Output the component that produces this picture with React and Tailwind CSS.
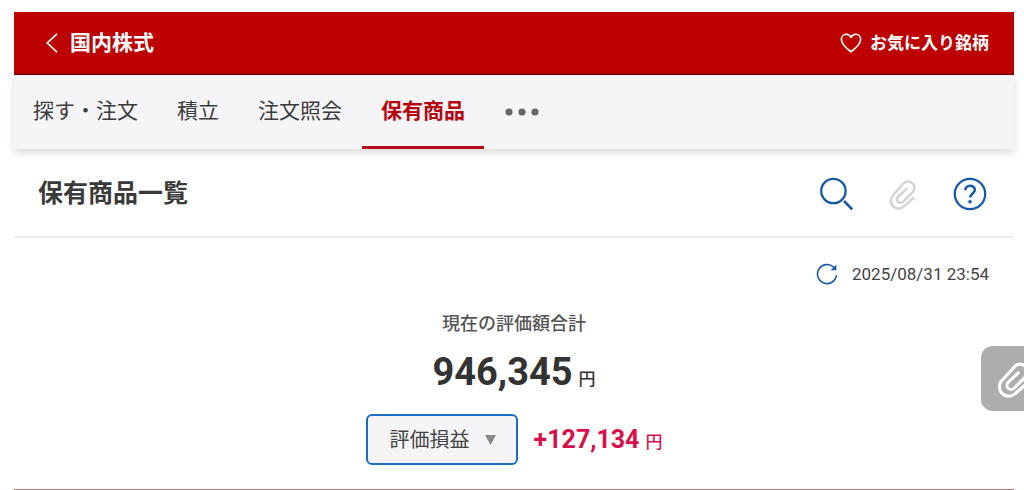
import React from 'react';

const tabs = [
  { id: 'search', label: '探す・注文' },
  { id: 'reserve', label: '積立' },
  { id: 'orders', label: '注文照会' },
  { id: 'holdings', label: '保有商品', active: true },
];

const ClipIcon = ({ className }) => (
  <svg viewBox="0 0 28 32" className={className} fill="none" stroke="currentColor" strokeLinecap="round" strokeLinejoin="round" aria-hidden="true">
    <path d="M24.6 20 15.1 28.2A7.8 7.8 0 0 1 4.1 17L14.8 5.2A6.3 6.3 0 0 1 23.8 14L14 23.8A3.5 3.5 0 0 1 9 18.8L17.6 10.8" />
  </svg>
);

const Header = () => (
  <header className="flex items-center justify-between border-b-2 border-[#8b0008] bg-[#bd0000] pt-[15px] pr-[25px] pb-[14px] pl-6 text-white">
    <a href="#" className="flex items-center gap-3 pl-2">
      <svg viewBox="0 0 12 20" className="h-5 w-3" fill="none" stroke="currentColor" strokeWidth="1.6" aria-hidden="true">
        <path d="M11 0.8 1.2 10 11 19.2" />
      </svg>
      <h1 className="text-[21px] leading-8 font-bold">国内株式</h1>
    </a>
    <button type="button" className="flex items-center gap-2 text-[17px] leading-8 font-bold">
      <svg viewBox="0 0 24 22" className="h-5 w-[22px]" fill="none" stroke="currentColor" strokeWidth="1.8" strokeLinejoin="round" aria-hidden="true">
        <path d="M12 20.6C8 17.6 1.4 12.8 1.4 7.2 1.4 3.9 3.8 1.4 6.8 1.4c2.3 0 4.2 1.3 5.2 3.4 1-2.1 2.9-3.4 5.2-3.4 3 0 5.4 2.5 5.4 5.8 0 5.6-6.6 10.4-10.6 13.4Z" />
      </svg>
      お気に入り銘柄
    </button>
  </header>
);

const Tabs = () => (
  <nav className="flex gap-px bg-[#f5f5f8] text-[21px] leading-8 text-[#3c3c3c] shadow-[0_4px_8px_rgba(0,0,0,0.14)]">
    {tabs.map((tab) => (
      <a
        key={tab.id}
        href="#"
        className={
          tab.active
            ? 'border-b-3 border-[#b00c14] px-[19px] pt-5 pb-[19px] font-bold text-[#b8040c]'
            : 'px-[19px] pt-5 pb-[19px]'
        }
      >
        {tab.label}
      </a>
    ))}
    <button type="button" aria-label="メニュー" className="px-5">
      <svg viewBox="0 0 34 8" className="h-2 w-[34px]" fill="#666" aria-hidden="true">
        <circle cx="4" cy="4" r="3.6" />
        <circle cx="17" cy="4" r="3.6" />
        <circle cx="30" cy="4" r="3.6" />
      </svg>
    </button>
  </nav>
);

const TitleBar = () => (
  <div className="flex items-center justify-between border-b-2 border-[#ececee] pt-[25px] pr-[27px] pb-[22px] pl-6">
    <h2 className="text-[25px] leading-10 font-bold text-[#3a3a3a]">保有商品一覧</h2>
    <div className="flex items-center gap-9 text-[#1559a8]">
      <button type="button" aria-label="検索">
        <svg viewBox="0 0 34 34" className="size-[34px]" fill="none" stroke="currentColor" strokeWidth="2.3" aria-hidden="true">
          <circle cx="14.4" cy="14" r="12.2" />
          <path d="m25 24 8.2 8.4" strokeWidth="2.6" />
        </svg>
      </button>
      <button type="button" aria-label="添付" className="text-[#d2d2d2]">
        <ClipIcon className="h-8 w-7 stroke-[2.4]" />
      </button>
      <button type="button" aria-label="ヘルプ">
        <svg viewBox="0 0 34 34" className="size-[34px]" fill="none" stroke="currentColor" strokeWidth="2.3" aria-hidden="true">
          <circle cx="17" cy="17" r="15.2" />
          <path d="M12.4 13.2c0-2.6 2-4.4 4.7-4.4s4.7 1.7 4.7 4.2c0 3.6-4.7 3.8-4.7 7.6" strokeWidth="2.6" />
          <circle cx="17" cy="24.8" r="1.8" fill="currentColor" stroke="none" />
        </svg>
      </button>
    </div>
  </div>
);

const Summary = () => (
  <section className="flex flex-col items-center">
    <div className="flex items-center gap-[14px] self-end pt-5 pr-[25px] text-[#1559a8]">
      <button type="button" aria-label="更新">
        <svg viewBox="0 0 22 22" className="size-[22px]" fill="none" stroke="currentColor" strokeWidth="1.6" aria-hidden="true">
          <path d="M20.4 12.4A9.5 9.5 0 1 1 17.6 4.2" />
          <path d="M20.4 1.4v5.8h-5.8Z" fill="currentColor" stroke="none" />
        </svg>
      </button>
      <time className="text-[17px] leading-8 text-[#444]">2025/08/31 23:54</time>
    </div>
    <h3 className="pt-[18px] text-[18px] leading-8 font-medium text-[#555]">現在の評価額合計</h3>
    <p className="flex items-baseline gap-[6px] pt-2 text-[#333]">
      <span className="text-[38px] leading-[48px] font-bold">946,345</span>
      <span className="text-[17px] font-medium">円</span>
    </p>
    <div className="flex items-center gap-4 pt-[18px] pb-6">
      <div className="relative">
        <select
          aria-label="表示項目"
          className="block h-[51px] w-[152px] appearance-none rounded-md border-2 border-[#1a6dc4] bg-[#f5f5f7] pl-[22px] text-[20px] text-[#444]"
        >
          <option>評価損益</option>
          <option>前日比</option>
        </select>
        <svg viewBox="0 0 11 10" className="pointer-events-none absolute top-[21px] right-[22px] h-[10px] w-[11px]" fill="#888" aria-hidden="true">
          <path d="M0 0h11L5.5 10Z" />
        </svg>
      </div>
      <p className="flex items-baseline gap-[6px] text-[#d90f4b]">
        <span className="text-[25px] leading-8 font-bold">+127,134</span>
        <span className="text-[17px] font-medium">円</span>
      </p>
    </div>
  </section>
);

const App = () => (
  <div className="overflow-x-hidden bg-white pt-3 pr-[10px] pl-[14px] font-[Roboto,'Noto_Sans_CJK_JP',sans-serif]" lang="ja">
    <Header />
    <Tabs />
    <main>
      <TitleBar />
      <Summary />
      <div className="border-t-2 border-[#b08084]" />
    </main>
    <button
      type="button"
      aria-label="クリップ"
      className="fixed top-[346px] -right-[22px] flex h-[65px] w-[65px] items-center justify-center rounded-xl bg-[#adadad] text-white"
    >
      <ClipIcon className="h-[38px] w-[34px] stroke-[2.6]" />
    </button>
  </div>
);

export default App;
